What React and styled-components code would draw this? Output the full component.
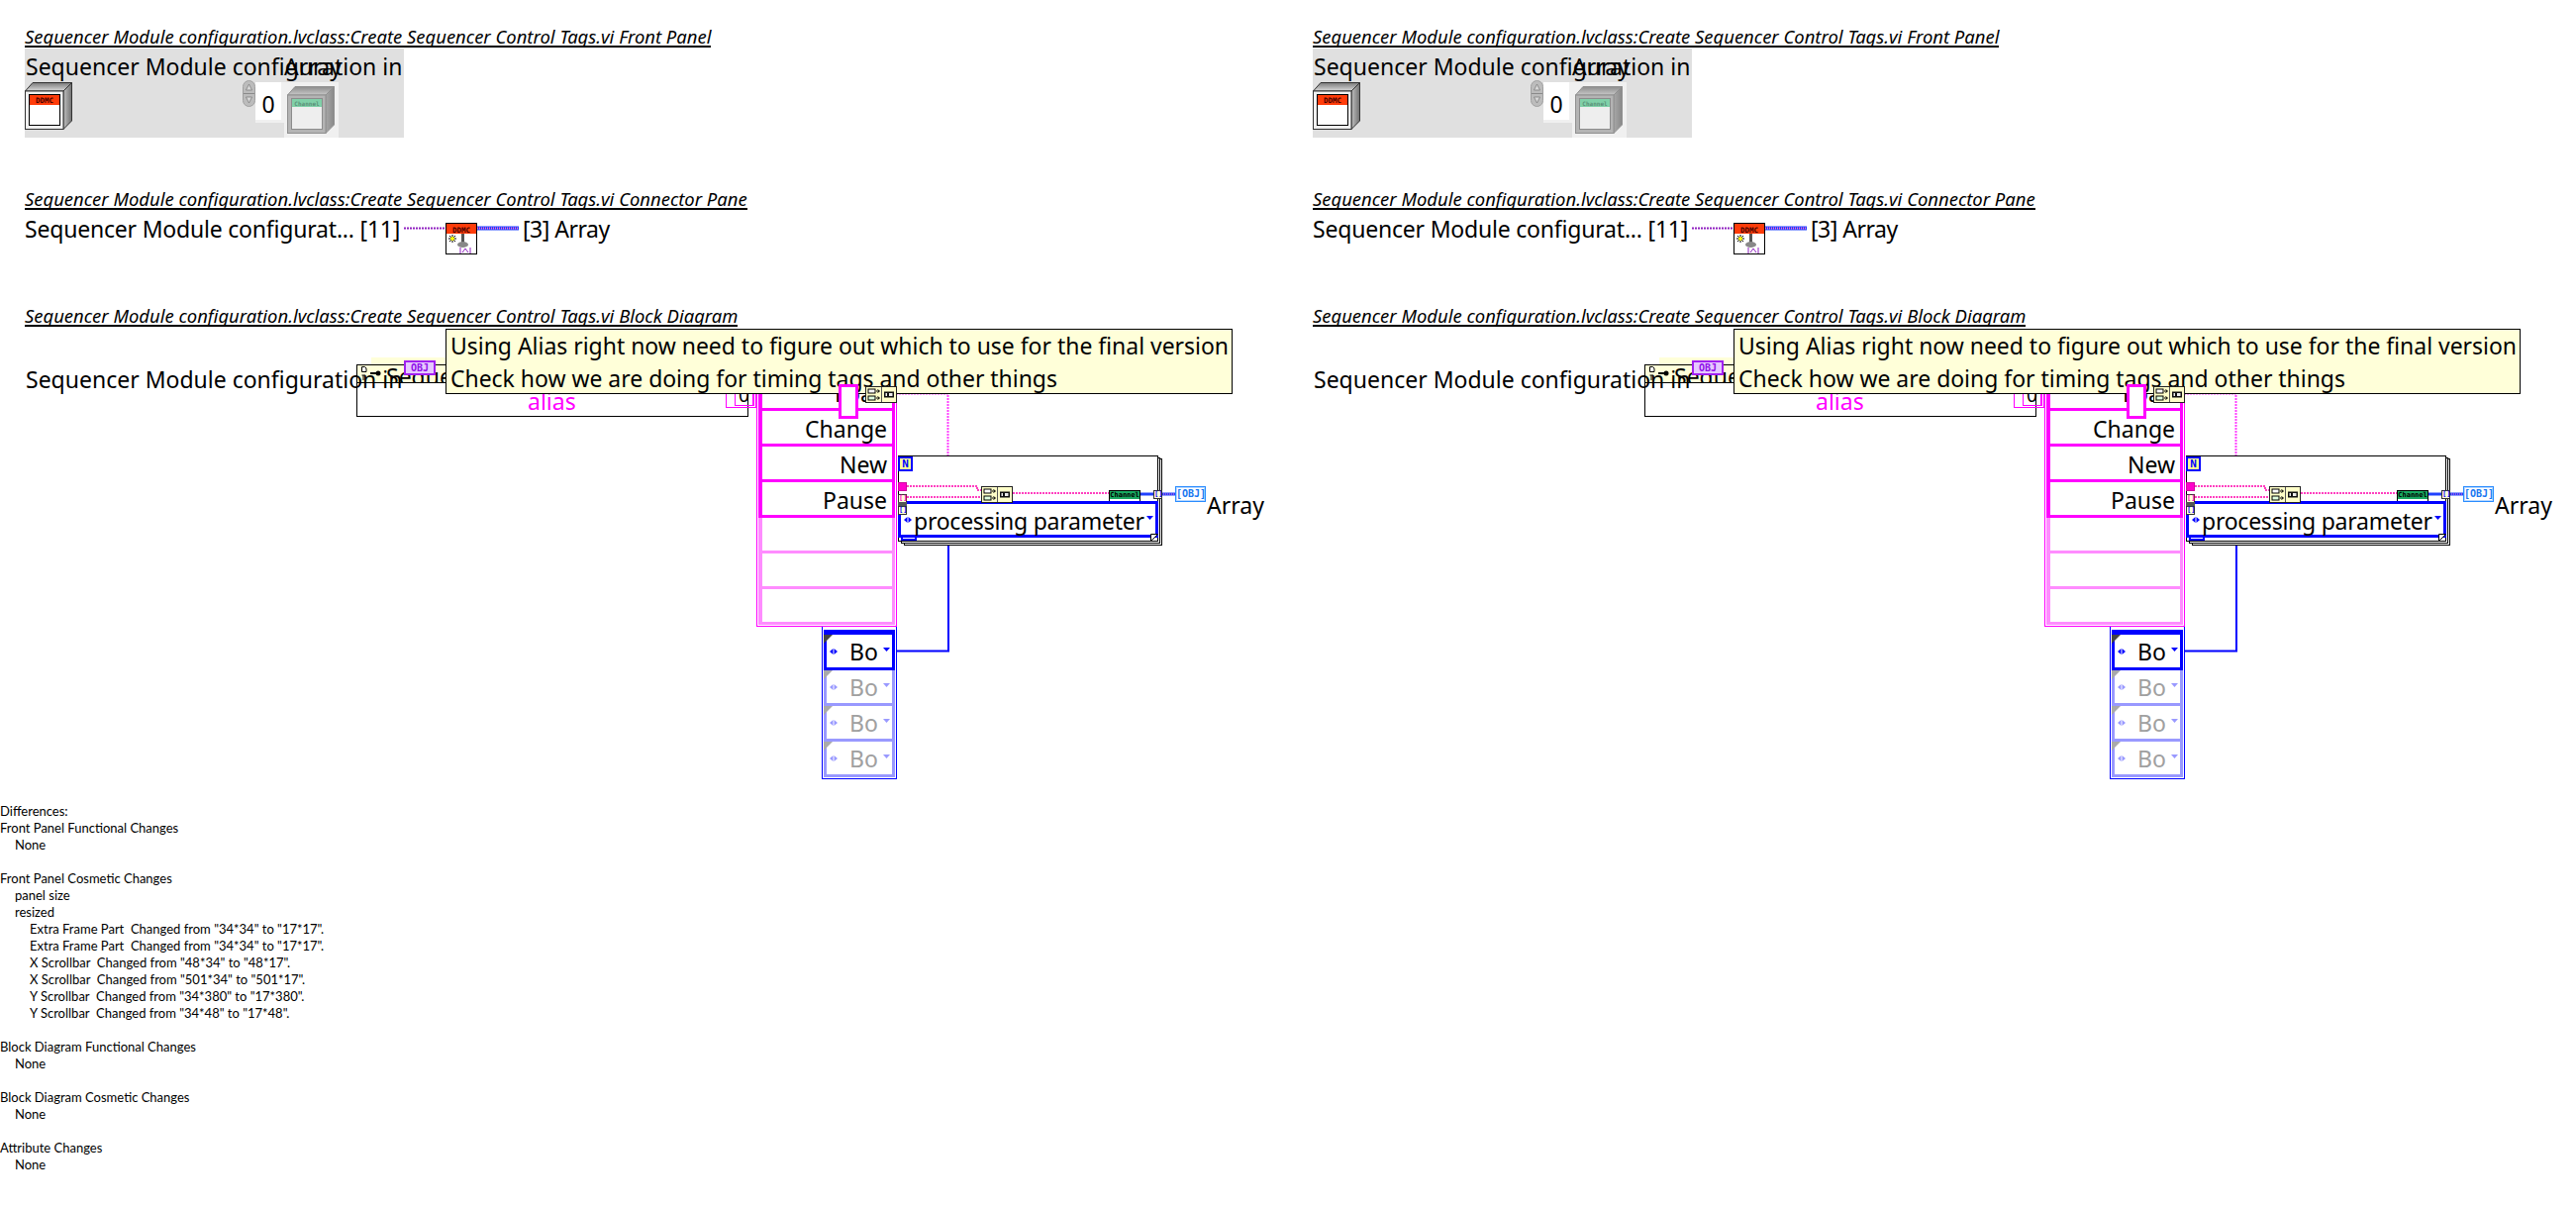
import React from "react"
import styled, { createGlobalStyle } from "styled-components"

const LABEL_FONT = `"Noto Sans", "Open Sans", sans-serif`
const PIXEL_FONT = `"DejaVu Sans Mono", "Liberation Mono", monospace`

const GlobalStyle = createGlobalStyle`
  html, body {
    margin: 0;
    background: #ffffff;
    color: #000000;
    font-family: ${LABEL_FONT};
  }
`

// diagram nodes are given in page coordinates of the column, the canvas starts at y=330
const node = (x, y, w, h) => `
  position: absolute;
  left: ${x}px;
  top: ${y - 330}px;
  width: ${w}px;
  height: ${h}px;
  box-sizing: border-box;
`
// same thing for the front panel, which starts at 25,49
const ctl = (x, y, w, h) => `
  position: absolute;
  left: ${x - 25}px;
  top: ${y - 49}px;
  width: ${w}px;
  height: ${h}px;
  box-sizing: border-box;
`

const Page = styled.div`
  display: grid;
  grid-template-columns: 1301px 1301px;
  width: 2602px;
  min-height: 1219px;
`
const Column = styled.div`
  display: flex;
  flex-direction: column;
  align-items: flex-start;
  padding-top: 27px;
`
const Heading = styled.div`
  margin: ${(p) => p.$top || 0}px 0 0 25px;
  height: 19px;
  border-bottom: 2px solid #000;
  font-size: 18.45px;
  line-height: 19px;
  font-style: italic;
  white-space: nowrap;
`
const Label = styled.span`
  font-size: 23px;
  line-height: 30px;
  white-space: nowrap;
`

/* front panel */
const Panel = styled.div`
  position: relative;
  width: 383px;
  height: 90px;
  margin: 1px 0 0 25px;
  background: #e0e0e0;
`
const PanelName = styled(Label)`
  position: absolute;
  left: 1px;
  top: 3px;
`
const ArrayName = styled(Label)`
  position: absolute;
  left: 262px;
  top: 3px;
`
const DdmcControl = styled.svg`
  ${ctl(25, 83, 48, 48)}
`
const Spinner = styled.svg`
  ${ctl(245, 81, 13, 27)}
`
const IndexBox = styled.div`
  ${ctl(258, 83, 29, 41)}
  background: #ffffff;
  border-right: 3px solid #f0f0f0;
  border-bottom: 3px solid #f0f0f0;
  font-size: 23px;
  line-height: 44px;
  text-align: center;
`
const ArrayWell = styled.div`
  ${ctl(287, 83, 55, 56)}
  background: #f0f0f0;
`
const ChannelControl = styled.svg`
  ${ctl(290, 87, 48, 48)}
`

/* connector pane */
const ConnectorRow = styled.div`
  display: flex;
  align-items: flex-start;
  box-sizing: border-box;
  height: 46px;
  margin: 0 0 0 25px;
  padding-top: 4px;
`
const ConnectorName = styled(Label)`
  width: 383px;
  letter-spacing: -0.2px;
`
const ConnectorGlyph = styled.svg`
  flex: none;
  width: 116px;
  height: 36px;
  margin-top: 9px;
`
const ConnectorOutput = styled(Label)`
  margin-left: 4px;
  letter-spacing: -0.5px;
`

/* block diagram */
const Canvas = styled.div`
  position: relative;
  width: 1301px;
  height: 470px;
`
const WireLayer = styled.svg`
  position: absolute;
  left: 0;
  top: 0;
  width: 1301px;
  height: 470px;
  z-index: ${(p) => p.$layer || 0};
`
const InputLabel = styled(Label)`
  ${node(26, 368, 380, 30)}
  z-index: 3;
`
const TitleGlow = styled.div`
  ${node(375, 361, 80, 8)}
  background: #ffffd9;
`
const SubFrame = styled.div`
  ${node(360, 368, 396, 53)}
  border: 1px solid #000;
`
const SubTitle = styled.div`
  height: 17px;
  background: #ffffd9;
  border-bottom: 1px solid #000;
  font-size: 23px;
  line-height: 22px;
  padding-left: 29px;
  overflow: hidden;
  white-space: nowrap;
`
const AliasText = styled(Label)`
  ${node(533, 390, 50, 30)}
  color: #ff00ff;
`
const RefIcon = styled.svg`
  ${node(364, 369, 24, 16)}
  z-index: 4;
`
const ObjChip = styled.div`
  ${node(408, 364, 32, 15)}
  border: 2px solid #a020f0;
  background: #e6c8ff;
  color: #9010e8;
  font: bold 10px/11px ${PIXEL_FONT};
  text-align: center;
  z-index: 4;
`
const IndexFrame = styled.div`
  ${node(733, 380, 31, 32)}
  border: 1px solid #ff00ff;
  padding: 1px;
`
const IndexInner = styled.div`
  box-sizing: border-box;
  height: 100%;
  margin-left: 7px;
  border: 1px solid #ff00ff;
  border-right-width: 2px;
  font-size: 19px;
  line-height: 33px;
  text-align: center;
`
const Note = styled.div`
  ${node(450, 332, 795, 66)}
  z-index: 5;
  border: 1px solid #000;
  background: #ffffd9;
  padding-left: 4px;
  font-size: 22.95px;
  line-height: 32.5px;
  white-space: nowrap;
`

const EnumStack = styled.div`
  ${node(764, 377, 142, 256)}
  z-index: 3;
  border: 1px solid #ff00ff;
  padding: 1px;
  background: #fff;
  display: flex;
  flex-direction: column;
`
const EnumRow = styled.div`
  flex: none;
  box-sizing: border-box;
  height: 36px;
  border: solid ${(p) => (p.$pale ? "#ff8cff" : "#ff00ff")};
  border-width: 0 3px 3px 4px;
  padding-right: 5px;
  font-size: 23px;
  line-height: 36px;
  text-align: right;
`
const RingTab = styled.div`
  ${node(847, 388, 20, 35)}
  z-index: 6;
  border: 3px solid #ff00ff;
  background: #fff;
`
const CoerceIcon = styled.svg`
  ${node(874, 390, 32, 17)}
  z-index: 6;
`

const TypeStack = styled.div`
  ${node(830, 400, 76, 387)}
  z-index: 2;
  border: 1px solid #0000ff;
  padding: 1px;
  background: #fff;
  display: flex;
  flex-direction: column;
  justify-content: flex-end;
`
const TypeRow = styled.div`
  position: relative;
  flex: none;
  box-sizing: border-box;
  border: solid ${(p) => (p.$pale ? "#9999ff" : "#0000ff")};
  border-width: ${(p) => (p.$pale ? "0 3px 3px 3px" : "5px 3px 3px 3px")};
  height: ${(p) => (p.$pale ? 36 : 41)}px;
  color: ${(p) => (p.$pale ? "#a0a0a0" : "#000")};
  font-size: 23px;
  line-height: 35px;
  padding-left: 23px;
  &::before {
    content: "";
    position: absolute;
    left: -3px;
    top: 0;
    width: 9px;
    height: 9px;
    background: ${(p) => (p.$pale ? "#aaaaaa" : "#444444")};
    clip-path: polygon(0 0, 100% 0, 0 100%);
  }
`
const Arrows = styled.svg`
  position: absolute;
  left: ${(p) => p.$left}px;
  top: 50%;
  width: 8px;
  height: 6px;
  margin-top: -3px;
`
const DropArrow = styled.svg`
  position: absolute;
  right: ${(p) => p.$right}px;
  top: 50%;
  width: 7px;
  height: 4px;
  margin-top: -4px;
`

const LoopBack = styled.div`
  ${node(913, 463, 261, 88)}
  border: 1px solid #000;
  background: #fff;
`
const LoopMiddle = styled.div`
  ${node(910, 462, 262, 87)}
  border: 1px solid #000;
  background: #fff;
`
const LoopFrame = styled.div`
  ${node(907, 460, 263, 87)}
  border: 1px solid #000;
  background: #fff;
`
const DogEar = styled.svg`
  ${node(1162, 539, 8, 8)}
  z-index: 4;
`
const CountBox = styled.div`
  ${node(907, 461, 15, 15)}
  z-index: 4;
  border: 2px solid #0000ff;
  background: #ffff99;
  color: #0000ff;
  font: bold 11px/11px ${PIXEL_FONT};
  text-align: center;
`
const ShiftIn = styled.div`
  ${node(907, 487, 9, 9)}
  z-index: 4;
  background: #ff00cc;
  border: 1px solid #d000a0;
`
const Tunnel = styled.div`
  ${(p) => node(p.$x, p.$y, 9, 9)}
  z-index: 4;
  border: 1px solid #333;
  background: #ffffd9;
  color: ${(p) => p.$color};
  font: bold 7px/7px ${PIXEL_FONT};
  text-align: center;
`
const ShiftWedge = styled.div`
  ${node(907, 507, 9, 4)}
  z-index: 4;
  background: #555;
`
const TinyIcon = styled.svg`
  ${node(991, 491, 32, 17)}
  z-index: 4;
`
const CaseBox = styled.div`
  ${node(907, 506, 263, 37)}
  z-index: 3;
  border: 3px solid #0000ff;
  background: #fff;
  font-size: 23px;
  letter-spacing: -0.25px;
  line-height: 34px;
  padding-left: 13px;
  white-space: nowrap;
`
const CaseFoot = styled.div`
  ${node(910, 540, 16, 6)}
  z-index: 2;
  border: 2px solid #0000ff;
`
const ChannelChip = styled.div`
  ${node(1120, 495, 32, 16)}
  z-index: 2;
  border: 1px solid #000;
  background: #fff;
`
const ChannelBar = styled.div`
  height: 8px;
  background: #18a860;
  color: #000;
  font: bold 7px/8px ${PIXEL_FONT};
  text-align: center;
`
const OutChip = styled.div`
  ${node(1187, 491, 31, 16)}
  z-index: 4;
  border: 1px solid #2a8cff;
  background: #fff;
  color: #1a78f0;
  font: bold 10px/14px ${PIXEL_FONT};
  text-align: right;
  padding-right: 2px;
  box-shadow: inset 0 0 0 1px #b8d8ff;
`
const OutputLabel = styled(Label)`
  ${node(1219, 495, 60, 30)}
`

/* differences list */
const DiffList = styled.div`
  margin-top: 11px;
  font-family: Lato, "Open Sans", sans-serif;
  font-size: 13px;
  line-height: 17px;
`
const DiffLine = styled.div`
  height: 17px;
  padding-left: ${(p) => p.$level * 15}px;
  white-space: pre;
`

const differences = [
  ["Differences:", 0],
  ["Front Panel Functional Changes", 0],
  ["None", 1],
  ["", 0],
  ["Front Panel Cosmetic Changes", 0],
  ["panel size", 1],
  ["resized", 1],
  ['Extra Frame Part  Changed from "34*34" to "17*17".', 2],
  ['Extra Frame Part  Changed from "34*34" to "17*17".', 2],
  ['X Scrollbar  Changed from "48*34" to "48*17".', 2],
  ['X Scrollbar  Changed from "501*34" to "501*17".', 2],
  ['Y Scrollbar  Changed from "34*380" to "17*380".', 2],
  ['Y Scrollbar  Changed from "34*48" to "17*48".', 2],
  ["", 0],
  ["Block Diagram Functional Changes", 0],
  ["None", 1],
  ["", 0],
  ["Block Diagram Cosmetic Changes", 0],
  ["None", 1],
  ["", 0],
  ["Attribute Changes", 0],
  ["None", 1],
]

const SelectorArrows = ({ color, left }) => (
  <Arrows $left={left} viewBox="0 0 8 6">
    <path d="M3.5 0 L0 3 L3.5 6 Z M4.5 0 L8 3 L4.5 6 Z" fill={color} />
  </Arrows>
)
const SelectorDrop = ({ color, right }) => (
  <DropArrow $right={right} viewBox="0 0 7 4">
    <path d="M0 0 H7 L3.5 4 Z" fill={color} />
  </DropArrow>
)

const ControlBox = ({ Svg, gray, children }) => (
  <Svg viewBox="0 0 48 48">
    <defs>
      <linearGradient id={gray ? "topG" : "topD"} x1="0" y1="0" x2="0" y2="1">
        <stop offset="0" stopColor={gray ? "#8c8c8c" : "#7a7a7a"} />
        <stop offset="1" stopColor={gray ? "#c8c8c8" : "#dcdcdc"} />
      </linearGradient>
      <linearGradient id={gray ? "sideG" : "sideD"} x1="0" y1="0" x2="1" y2="0">
        <stop offset="0" stopColor={gray ? "#a8a8a8" : "#c0c0c0"} />
        <stop offset="1" stopColor={gray ? "#888" : "#707070"} />
      </linearGradient>
    </defs>
    <path d="M0.5 9 L8 0.5 H47.5 L39 9 Z" fill={`url(#${gray ? "topG" : "topD"})`} stroke={gray ? "#909090" : "#333"} />
    <path d="M39 9 L47.5 0.5 V39 L39 47.5 Z" fill={`url(#${gray ? "sideG" : "sideD"})`} stroke={gray ? "#909090" : "#333"} />
    <rect x="0.5" y="9" width="38.5" height="38.5" fill={gray ? "#b4b4b4" : "#f0f0f0"} stroke={gray ? "#909090" : "#333"} />
    {children}
  </Svg>
)

const PairIcon = ({ Svg }) => (
  <Svg viewBox="0 0 32 17">
    <rect x="0.5" y="0.5" width="31" height="16" fill="#ffffc8" stroke="#222" />
    <path d="M16.5 1 V16" stroke="#555" />
    <rect x="3" y="3" width="7" height="4" fill="#fff" stroke="#000" />
    <rect x="3" y="10" width="7" height="4" fill="#dfffdf" stroke="#000" />
    <path d="M11 5 H14 M12.5 3.5 L14.5 5 L12.5 6.5 M11 12 H14 M12.5 10.5 L14.5 12 L12.5 13.5" stroke="#000" fill="none" />
    <rect x="19" y="5.5" width="10" height="6" fill="#111" />
    <path d="M20.5 7 H22 V10 H20.5 Z M24 7 H27.5 V10 H24 Z" fill="#eee" />
  </Svg>
)

const ViReport = ({ children }) => (
  <Column>
    <Heading>Sequencer Module configuration.lvclass:Create Sequencer Control Tags.vi Front Panel</Heading>
    <Panel>
      <PanelName>Sequencer Module configuration in</PanelName>
      <ArrayName>Array</ArrayName>
      <ControlBox Svg={DdmcControl}>
        <rect x="4.5" y="12.5" width="31" height="31" fill="#fff" stroke="#000" />
        <rect x="5" y="13" width="30" height="10" fill="#ff3c0a" />
        <text x="20" y="21" fontFamily={PIXEL_FONT} fontWeight="bold" fontSize="7.5" textAnchor="middle" fill="#400">DDMC</text>
      </ControlBox>
      <Spinner viewBox="0 0 13 27">
        <rect x="0.5" y="0.5" width="12" height="26" rx="6" fill="#bcbcbc" stroke="#a0a0a0" />
        <path d="M1 13.5 H12" stroke="#8a8a8a" />
        <path d="M6.5 4 L3.5 10 H9.5 Z M6.5 23 L3.5 17 H9.5 Z" fill="#d8d8d8" stroke="#777" strokeWidth="0.7" />
      </Spinner>
      <IndexBox>0</IndexBox>
      <ArrayWell />
      <ControlBox Svg={ChannelControl} gray>
        <rect x="4.5" y="12.5" width="31" height="31" fill="#eeeeee" stroke="#8c8c8c" />
        <rect x="5" y="13" width="30" height="8" fill="#80d0a8" />
        <text x="20" y="19.5" fontFamily={PIXEL_FONT} fontWeight="bold" fontSize="6" textAnchor="middle" fill="#5a9078">Channel</text>
      </ControlBox>
    </Panel>

    <Heading $top={52}>Sequencer Module configuration.lvclass:Create Sequencer Control Tags.vi Connector Pane</Heading>
    <ConnectorRow>
      <ConnectorName>Sequencer Module configurat... [11]</ConnectorName>
      <ConnectorGlyph viewBox="0 0 116 36">
        <path d="M0 5.5 H42" stroke="#9020c0" strokeWidth="2" strokeDasharray="2 1" />
        <path d="M74 5.5 H116" stroke="#2040ff" strokeWidth="4" />
        <path d="M74 5.5 H116" stroke="#ff70d0" strokeWidth="2" strokeDasharray="1 1" />
        <rect x="42.5" y="0.5" width="31" height="31" fill="#fff" stroke="#000" />
        <rect x="43" y="1" width="30" height="10" fill="#ff3c0a" />
        <text x="58" y="9.5" fontFamily={PIXEL_FONT} fontWeight="bold" fontSize="7.5" textAnchor="middle" fill="#400">DDMC</text>
        <path d="M45 16 H53 M49 12 V20 M46 13 L52 19 M52 13 L46 19" stroke="#000" strokeWidth="1" />
        <circle cx="49" cy="16" r="2" fill="#ffff00" />
        <path d="M59.5 11 V20" stroke="#555" strokeWidth="3" />
        <ellipse cx="59.5" cy="22" rx="5.5" ry="3" fill="#888" />
        <path d="M57 31 V25 M67 31 V25 M59 30 L62 26 L65 30" stroke="#9020c0" fill="none" />
      </ConnectorGlyph>
      <ConnectorOutput>[3] Array</ConnectorOutput>
    </ConnectorRow>

    <Heading $top={51}>Sequencer Module configuration.lvclass:Create Sequencer Control Tags.vi Block Diagram</Heading>
    <Canvas>
      <TitleGlow />
      <SubFrame>
        <SubTitle>Sequencer Module</SubTitle>
      </SubFrame>
      <RefIcon viewBox="0 0 24 16">
        <path d="M1.5 1.5 H4.5 L6 3 V6.5 H1.5 Z" fill="#fff" stroke="#000" />
        <path d="M1.5 10 H5 M3 10 V15" stroke="#000" />
        <circle cx="18" cy="8" r="2.5" fill="#000" />
        <path d="M10 8 H17" stroke="#000" strokeWidth="2" />
      </RefIcon>
      <ObjChip>OBJ</ObjChip>
      <InputLabel>Sequencer Module configuration in</InputLabel>
      <AliasText>alias</AliasText>
      <IndexFrame>
        <IndexInner>0</IndexInner>
      </IndexFrame>

      <WireLayer viewBox="0 0 1301 470">
        <path d="M905 67.5 H957.5 V130" stroke="#ff40ff" strokeWidth="2" strokeDasharray="2 1" fill="none" />
        <path d="M906 327.5 H958 V218" stroke="#0000ff" strokeWidth="2" fill="none" />
      </WireLayer>

      <TypeStack>
        <TypeRow>
          Bo
          <SelectorArrows color="#0000ff" left={3} />
          <SelectorDrop color="#0000ff" right={2} />
        </TypeRow>
        {[0, 1, 2].map((i) => (
          <TypeRow key={i} $pale>
            Bo
            <SelectorArrows color="#9999ff" left={3} />
            <SelectorDrop color="#9999ff" right={2} />
          </TypeRow>
        ))}
      </TypeStack>
      <EnumStack>
        <EnumRow>Load</EnumRow>
        <EnumRow>Change</EnumRow>
        <EnumRow>New</EnumRow>
        <EnumRow>Pause</EnumRow>
        <EnumRow $pale />
        <EnumRow $pale />
        <EnumRow $pale />
      </EnumStack>

      <Note>
        Using Alias right now need to figure out which to use for the final version
        <br />
        Check how we are doing for timing tags and other things
      </Note>
      <RingTab />
      <PairIcon Svg={CoerceIcon} />

      <LoopBack />
      <LoopMiddle />
      <LoopFrame />
      <WireLayer viewBox="0 0 1301 470" $layer={3}>
        <path d="M916 161 H987 V165 H991 M916 172 H991 M1023 168 H1120" stroke="#ff40c0" strokeWidth="2" strokeDasharray="2 1" fill="none" />
        <path d="M1152 169 H1166" stroke="#2040ff" strokeWidth="3" fill="none" />
        <path d="M1173 169 H1187" stroke="#2040ff" strokeWidth="3" fill="none" />
        <path d="M1173 169 H1187" stroke="#ff70d0" strokeWidth="1" strokeDasharray="1 1" fill="none" />
      </WireLayer>
      <CountBox>N</CountBox>
      <ShiftIn />
      <Tunnel $x={907} $y={499} $color="#ff00cc">[]</Tunnel>
      <ShiftWedge />
      <Tunnel $x={907} $y={511} $color="#0000ff">[]</Tunnel>
      <PairIcon Svg={TinyIcon} />
      <ChannelChip>
        <ChannelBar>Channel</ChannelBar>
      </ChannelChip>
      <CaseFoot />
      <CaseBox>
        processing parameter
        <SelectorArrows color="#0000ff" left={3} />
        <SelectorDrop color="#0000ff" right={2} />
      </CaseBox>
      <Tunnel $x={1165} $y={495} $color="#0000ff">[]</Tunnel>
      <DogEar viewBox="0 0 8 8">
        <path d="M0.5 7.5 L7.5 0.5 H0.5 Z" fill="#fff" stroke="#000" />
      </DogEar>
      <OutChip>[OBJ]</OutChip>
      <OutputLabel>Array</OutputLabel>
    </Canvas>
    {children}
  </Column>
)

const App = () => (
  <Page>
    <GlobalStyle />
    <ViReport>
      <DiffList>
        {differences.map(([text, level], i) => (
          <DiffLine key={i} $level={level}>{text}</DiffLine>
        ))}
      </DiffList>
    </ViReport>
    <ViReport />
  </Page>
)

export default App
